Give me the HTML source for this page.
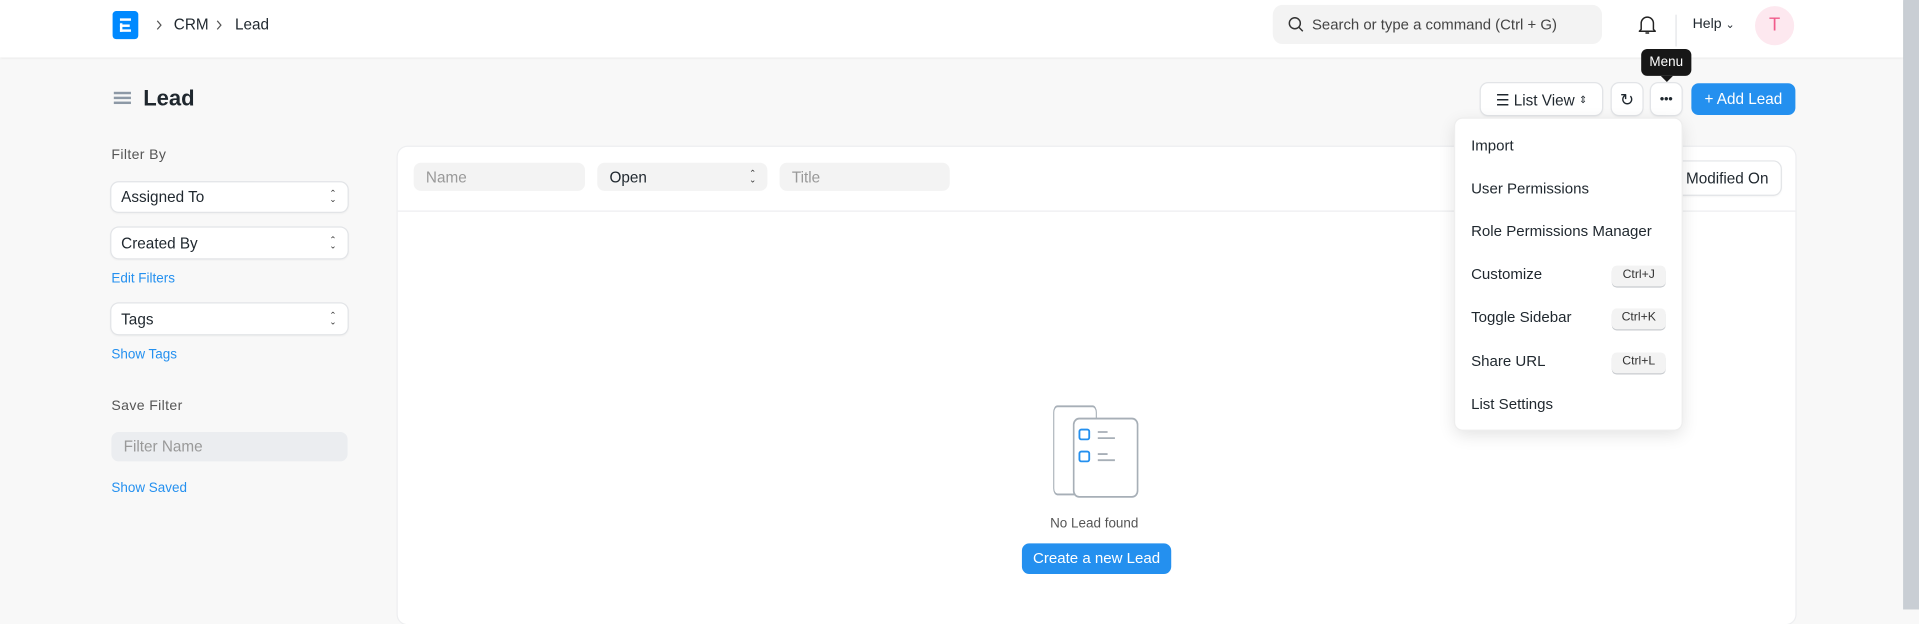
<!DOCTYPE html>
<html><head><meta charset="utf-8"><style>
*{box-sizing:border-box;margin:0;padding:0}
html,body{width:1919px;height:609px;overflow:hidden;background:#f8f8f8;font-family:"Liberation Sans",sans-serif;color:#1f272e}
#w{position:absolute;left:0;top:0;width:1568px;height:498px;transform:scale(1.22385);transform-origin:0 0;background:#f8f8f8}
.a{position:absolute}
.hdr{left:0;top:0;width:1555px;height:47px;background:#fff;box-shadow:0 1px 2px rgba(0,0,0,.08)}
.t13{font-size:12.5px}
.sel{background:#fff;border-radius:6px;box-shadow:0 0 0 1px #e2e4e7,0 1px 2px rgba(0,0,0,.08);font-size:12.5px;padding:0 8px;display:flex;align-items:center}
.arr{position:absolute;right:9px;top:50%;transform:translateY(-50%);font-size:7px;line-height:5px;color:#333;text-align:center}
.inp{background:#f3f3f3;border-radius:6px;font-size:12.5px;color:#999;padding:0 10px;display:flex;align-items:center}
.lnk{font-size:11px;color:#2490ef}
.mi{left:13px;font-size:12.3px;color:#1f272e}
.kbd{right:13px;width:44px;height:17px;background:#f3f3f3;border-radius:4px;box-shadow:0 1px 0 #c8cbcf;font-size:10px;color:#333;text-align:center;line-height:16px}
.btn{background:#fff;border-radius:6px;box-shadow:0 0 0 1px #e2e4e7,0 1px 2px rgba(0,0,0,.08);display:flex;align-items:center;justify-content:center;font-size:12.5px}
</style></head><body><div id="w">
<div class="a" style="left:1555px;top:0;width:13px;height:498px;background:#c9ced4"></div>
<div class="a hdr"></div>
<div class="a" style="left:92px;top:9px;width:21px;height:23px;background:#0089ff;border-radius:3px"></div>
<div class="a" style="left:98px;top:15px;width:9px;height:2px;background:#fff"></div>
<div class="a" style="left:98px;top:19px;width:2px;height:7px;background:#fff"></div>
<div class="a" style="left:98px;top:19.5px;width:8px;height:2px;background:#fff"></div>
<div class="a" style="left:98px;top:24px;width:9px;height:2px;background:#fff"></div>
<svg class="a" style="left:127px;top:16px" width="6" height="9" viewBox="0 0 6 9"><path d="M1.5 1l3 3.5-3 3.5" fill="none" stroke="#555" stroke-width="1"/></svg>
<div class="a t13" style="left:142px;top:13px">CRM</div>
<svg class="a" style="left:176px;top:16px" width="6" height="9" viewBox="0 0 6 9"><path d="M1.5 1l3 3.5-3 3.5" fill="none" stroke="#555" stroke-width="1"/></svg>
<div class="a t13" style="left:192px;top:13px">Lead</div>
<div class="a" style="left:1040px;top:4px;width:269px;height:32px;background:#f3f3f3;border-radius:8px"></div>
<svg class="a" style="left:1052px;top:13px" width="14" height="14" viewBox="0 0 14 14"><circle cx="6" cy="6" r="4.5" fill="none" stroke="#333" stroke-width="1.2"/><path d="M9.3 9.3L12.5 12.5" stroke="#333" stroke-width="1.2"/></svg>
<div class="a" style="left:1072px;top:13px;color:#444;font-size:12.2px">Search or type a command (Ctrl + G)</div>
<svg class="a" style="left:1338px;top:11px" width="16" height="18" viewBox="0 0 16 18"><path d="M3 13V8a5 5 0 0110 0v5l1.5 1.5h-13z" fill="none" stroke="#222" stroke-width="1.2" stroke-linejoin="round"/><path d="M6.5 16h3" stroke="#222" stroke-width="1.2"/></svg>
<div class="a" style="left:1369px;top:12px;width:1px;height:26px;background:#e2e4e7"></div>
<div class="a" style="left:1383px;top:14px;font-size:11.5px">Help <span style="font-size:9px">⌄</span></div>
<div class="a" style="left:1434px;top:5px;width:32px;height:32px;border-radius:50%;background:#fde8ef;color:#f05b8b;font-size:15px;text-align:center;line-height:32px">T</div>
<div class="a" style="left:93px;top:75px;width:14px;height:2px;background:#8d99a6;box-shadow:0 4px 0 #8d99a6,0 8px 0 #8d99a6"></div>
<div class="a" style="left:117px;top:70px;font-size:18px;font-weight:bold">Lead</div>
<div class="a btn" style="left:1210px;top:68px;width:99px;height:26px">☰&nbsp;List View&nbsp;<span style="font-size:8px">⇕</span></div>
<div class="a btn" style="left:1317px;top:68px;width:25px;height:26px;font-size:14px">↻</div>
<div class="a btn" style="left:1349px;top:68px;width:25px;height:26px;font-size:10px;font-weight:bold">•••</div>
<div class="a" style="left:1382px;top:68px;width:85px;height:26px;background:#2490ef;border-radius:6px;color:#fff;font-size:12.5px;line-height:26px;text-align:center">+ Add Lead</div>
<div class="a" style="left:1341px;top:40px;width:41px;height:22px;background:#171717;border-radius:5px;color:#fff;font-size:11px;text-align:center;line-height:22px">Menu</div>
<div class="a" style="left:1357px;top:62px;width:0;height:0;border-left:5px solid transparent;border-right:5px solid transparent;border-top:5px solid #171717"></div>
<div class="a" style="left:91px;top:121px;font-size:11.5px;color:#555;letter-spacing:.3px">Filter By</div>
<div class="a sel" style="left:91px;top:149px;width:193px;height:24px">Assigned To<span class="arr">⌃<br>⌄</span></div>
<div class="a sel" style="left:91px;top:186px;width:193px;height:25px">Created By<span class="arr">⌃<br>⌄</span></div>
<div class="a lnk" style="left:91px;top:222px">Edit Filters</div>
<div class="a sel" style="left:91px;top:248px;width:193px;height:25px">Tags<span class="arr">⌃<br>⌄</span></div>
<div class="a lnk" style="left:91px;top:284px">Show Tags</div>
<div class="a" style="left:91px;top:326px;font-size:11.5px;color:#555;letter-spacing:.3px">Save Filter</div>
<div class="a inp" style="left:91px;top:353px;width:193px;height:24px;background:#ebedf0">Filter Name</div>
<div class="a lnk" style="left:91px;top:393px">Show Saved</div>
<div class="a" style="left:325px;top:120px;width:1142px;height:390px;background:#fff;border-radius:8px;box-shadow:0 0 0 1px #edeef0"></div>
<div class="a" style="left:325px;top:172px;width:1142px;height:1px;background:#edeef0"></div>
<div class="a inp" style="left:338px;top:133px;width:140px;height:23px">Name</div>
<div class="a inp" style="left:488px;top:133px;width:139px;height:23px;color:#1f272e">Open<span class="arr">⌃<br>⌄</span></div>
<div class="a inp" style="left:637px;top:133px;width:139px;height:23px">Title</div>
<div class="a btn" style="left:1360px;top:132px;width:95px;height:27px;justify-content:flex-end;padding-right:10px">Modified On</div>
<svg class="a" style="left:855px;top:328px" width="80" height="82" viewBox="0 0 80 82"><rect x="6" y="4" width="58" height="72" rx="5" fill="#fff" stroke="#a7afb7" stroke-width="1.5" transform="scale(.6,1) translate(4,0)"/><rect x="17" y="14" width="58" height="64" rx="5" fill="#fff" stroke="#a7afb7" stroke-width="1.5" transform="translate(7,0) scale(.9,1)"/><rect x="27" y="23" width="8" height="8" rx="1.5" fill="none" stroke="#2490ef" stroke-width="1.5"/><rect x="27" y="41" width="8" height="8" rx="1.5" fill="none" stroke="#2490ef" stroke-width="1.5"/><path d="M42 25h8M42 30h14M42 43h8M42 48h14" stroke="#a7afb7" stroke-width="1.5"/></svg>
<div class="a" style="left:858px;top:422px;font-size:11px;color:#555">No Lead found</div>
<div class="a" style="left:835px;top:444px;width:122px;height:25px;background:#2490ef;border-radius:6px;color:#fff;font-size:12.3px;text-align:center;line-height:25px">Create a new Lead</div>
<div class="a" style="left:1189px;top:97px;width:185px;height:254px;background:#fff;border-radius:6px;box-shadow:0 0 0 1px #eee,0 4px 14px rgba(0,0,0,.12)">
<div class="a mi" style="top:15px">Import</div>
<div class="a mi" style="top:50px">User Permissions</div>
<div class="a mi" style="top:85px">Role Permissions Manager</div>
<div class="a mi" style="top:120px">Customize</div><div class="a kbd" style="top:120px">Ctrl+J</div>
<div class="a mi" style="top:155px">Toggle Sidebar</div><div class="a kbd" style="top:155px">Ctrl+K</div>
<div class="a mi" style="top:191px">Share URL</div><div class="a kbd" style="top:191px">Ctrl+L</div>
<div class="a mi" style="top:226px">List Settings</div>
</div>
</div></body></html>
